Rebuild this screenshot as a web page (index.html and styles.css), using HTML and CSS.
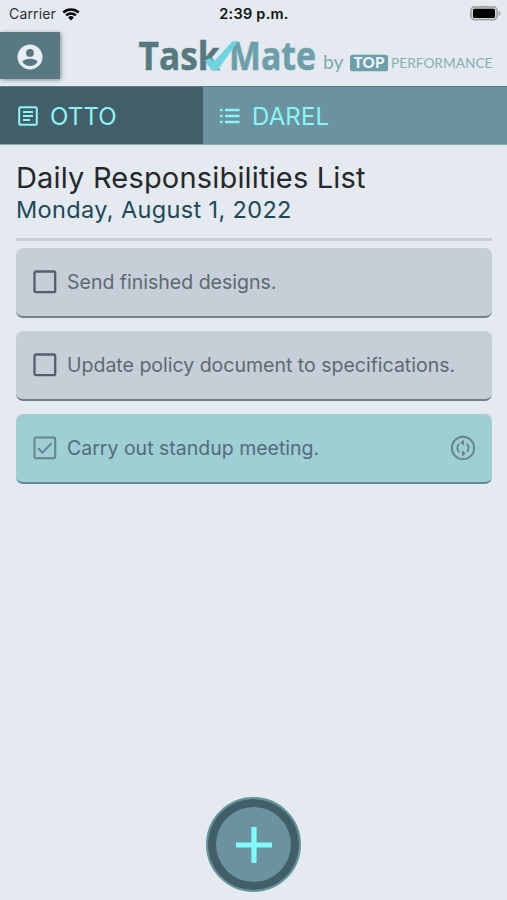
FILE: index.html
```html
<!DOCTYPE html>
<html lang="en">
<head>
<meta charset="utf-8">
<title>TaskMate</title>
<link rel="stylesheet" href="styles.css">
</head>
<body>
<div class="status">
  <div class="carrier"><span class="carrier-name">Carrier</span>
    <svg class="wifi" viewBox="0 0 18 14"><path d="M9 13.6 6.1 10.5a4.2 4.2 0 0 1 5.8 0zM4.900 9.300a6 6 0 0 1 8.200 0l1.600-1.700a8.300 8.300 0 0 0-11.400 0zM2.100 6.400a10 10 0 0 1 13.800 0l1.700-1.800a12.400 12.400 0 0 0-17.200 0z"/></svg>
  </div>
  <span class="clock">2:39 p.m.</span>
  <svg class="battery" viewBox="0 0 31 15"><rect x=".9" y=".9" width="26.2" height="12.9" rx="3.8" fill="#cfd3d6" stroke="#a0a2a5" stroke-width="1.6"/><rect x="3" y="2.8" width="22" height="9.2" rx="1.6"/><path d="M28.6 5v5c1.3-.5 2-1.400 2-2.500s-.7-2-2-2.500z" fill="#a0a2a5"/></svg>
</div>
<header class="header">
  <div class="account"><svg viewBox="0 0 24 24"><path d="M12 2a10 10 0 1 0 0 20 10 10 0 0 0 0-20zm0 3.600a3.100 3.100 0 1 1 0 6.200 3.100 3.100 0 0 1 0-6.200zm0 13.600c-2.500 0-4.700-1.200-6-3.100.1-2 4-2.700 6-2.700s5.900.7 6 2.700c-1.300 1.900-3.500 3.100-6 3.100z"/></svg></div>
  <svg class="logo" viewBox="0 0 360 50">
    <g font-family="'Open Sans', sans-serif" font-weight="700" font-size="38.500" stroke-width=".5">
      <text x="0.500" y="39.300" textLength="81" lengthAdjust="spacingAndGlyphs" fill="#56797f" stroke="#56797f">Task</text>
      <text x="91" y="39.300" textLength="87" lengthAdjust="spacingAndGlyphs" fill="#6c9fa9" stroke="#6c9fa9">Mate</text>
    </g>
    <path d="M90 26V8h10z" fill="#e4eaf0"/>
    <path d="M67 29.500l5-2.500 4 3.500L94.500 10.200h5.500l-20.500 29.300h-6z" fill="#6ed5e0"/>
    <text x="185" y="38.300" font-family="Lato, sans-serif" font-size="19" textLength="20.500" lengthAdjust="spacingAndGlyphs" fill="#7ba9b1">by</text>
    <rect x="212" y="23.800" width="38" height="16.400" rx="2.500" fill="#6c9fa9"/>
    <text x="215.500" y="37.300" font-family="Lato, sans-serif" font-weight="900" font-size="15" textLength="31" fill="#eef3f6">TOP</text>
    <text x="253" y="37.300" font-family="Lato, sans-serif" font-size="14" textLength="101.500" lengthAdjust="spacingAndGlyphs" fill="#86b0b4">PERFORMANCE</text>
  </svg>
</header>
<nav class="tabs">
  <div class="tab tab-active"><svg class="tab-icon" viewBox="0 0 20 20" fill="none" stroke="#8af6f5" stroke-width="2"><rect x="1.200" y="1.200" width="17.600" height="17.600" rx="1.500"/><path d="M5 6h10M5 10h10M5 14h7"/></svg><span class="otto">OTTO</span></div>
  <div class="tab tab-rest"><svg class="tab-icon" viewBox="0 0 20 20" fill="none" stroke="#8af6f5" stroke-width="2.300"><path d="M0 4h2.500M5 4h14.500M0 10h2.500M5 10h14.500M0 16h2.500M5 16h14.500"/></svg><span class="darel">DAREL</span></div>
</nav>
<main class="main">
  <h1 class="title">Daily Responsibilities List</h1>
  <p class="date">Monday, August 1, 2022</p>
  <ul class="list">
    <li class="card"><svg class="check" viewBox="0 0 24 24" fill="none" stroke="#52606a" stroke-width="2.300"><rect x="1.500" y="1.500" width="20.700" height="20.700" rx="1.500"/></svg><span class="send">Send finished designs.</span></li>
    <li class="card"><svg class="check" viewBox="0 0 24 24" fill="none" stroke="#52606a" stroke-width="2.300"><rect x="1.500" y="1.500" width="20.700" height="20.700" rx="1.500"/></svg><span class="update">Update policy document to specifications.</span></li>
    <li class="card card-done"><svg class="check" viewBox="0 0 24 24" fill="none" stroke="#648490" stroke-width="2"><rect x="1.500" y="1.500" width="20.700" height="20.700" rx="1.500"/><path d="M5.200 12.300l4.300 4.300 9.200-9.500"/></svg><span class="carry">Carry out standup meeting.</span>
      <svg class="repeat" viewBox="0 0 26 26" fill="none" stroke="#648490" stroke-width="1.900"><circle cx="13" cy="13" r="11.200"/><path d="M9.300 17.200A5.600 5.600 0 0 1 9 9M16.700 8.800A5.600 5.600 0 0 1 17 17M12.500 7.600h1.600M13.500 18.400h-1.600"/><path d="M13.800 4.500v6.200l-3.500-3.100zM12.200 15.300v6.200l3.500-3.100z" fill="#648490" stroke="none"/></svg>
    </li>
  </ul>
</main>
<div class="footer"><div class="add"><svg viewBox="0 0 36 36"><path d="M18 0v36M0 18h36" stroke="#82fbfc" stroke-width="5.200"/></svg></div></div>
</body>
</html>
```

FILE: styles.css
```css
* { box-sizing: border-box; }
body {
  margin: 0;
  height: 900px;
  display: flex;
  flex-direction: column;
  overflow: hidden;
  background: #e4eaf0;
  font-family: Inter, sans-serif;
}
svg { display: block; flex: none; }
span, h1, p { white-space: nowrap; }
.status {
  height: 27px;
  display: grid;
  grid-template-columns: 1fr auto 1fr;
  align-items: center;
  padding: 0 6px 0 9px;
  font-size: 14px;
  color: #111;
}
.carrier { display: flex; align-items: center; gap: 6px; }
.carrier-name { color: #2c3034; letter-spacing: 0.15px; }
.wifi { width: 18px; height: 14px; }
.clock { margin-right: 2px; font-size: 14.500px; font-weight: 600; letter-spacing: 0.250px; }
.battery { width: 31px; height: 15px; justify-self: end; }
.header { height: 59px; display: flex; justify-content: space-between; align-items: flex-start; }
.account {
  width: 60px;
  height: 47px;
  margin-top: 5px;
  padding: 10px 0 0 15px;
  background: #587983;
  box-shadow: 1px 1px 4px #84929b;
}
.account svg { width: 30px; height: 30px; fill: #e8eef4; }
.logo { width: 360px; height: 50px; margin: 4px 9px 0 0; overflow: visible; }
.tabs { height: 59px; display: flex; border-top: 1px solid #5c7b86; border-bottom: 1px solid #8aa7b2; color: #8af6f5; font-size: 24px; }
.tab { display: flex; align-items: center; padding-left: 18px; gap: 12px; }
.tab-active { width: 203px; background: #445e69; }
.tab-rest { flex: 1; padding-left: 17px; background: #6a929f; }
.tab-icon { width: 20px; height: 20px; }
.otto, .darel { padding-top: 1px; letter-spacing: 0.15px; }
.main { padding: 16px 15px 0 16px; }
.title { margin: 0; font-size: 29px; line-height: 34px; font-weight: 400; color: #24272b; letter-spacing: 0.180px; }
.date { margin: 0; font-size: 23.500px; line-height: 30px; color: #204859; letter-spacing: 0.360px; }
.list { list-style: none; margin: 13px 0 0; padding: 7px 0 0; border-top: 3px solid #c7ccd0; display: flex; flex-direction: column; gap: 13px; }
.card {
  height: 70px;
  display: flex;
  align-items: center;
  padding: 0 16px 0 17px;
  gap: 10px;
  border-radius: 7px;
  border-bottom: 2px solid #718188;
  background: #c6cfd7;
  color: #5c6973;
  font-size: 19.500px;
}
.card-done { background: #9fced5; border-bottom-color: #648b94; color: #526d7b; }
.check { width: 24px; height: 24px; }
.repeat { width: 26px; height: 26px; margin-left: auto; }
.footer { margin-top: auto; display: flex; justify-content: center; padding-bottom: 8px; }
.add {
  width: 95px;
  height: 95px;
  display: flex;
  align-items: center;
  justify-content: center;
  border-radius: 50%;
  border: 2px solid #629599;
  background: #6a929f;
  box-shadow: inset 0 0 0 8px #425e69;
}
.add svg { width: 36px; height: 36px; }
```
